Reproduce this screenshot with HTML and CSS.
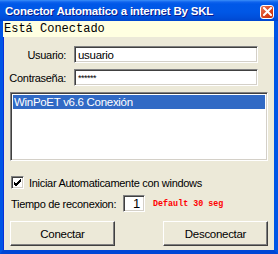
FILE: index.html
```html
<!DOCTYPE html>
<html>
<head>
<meta charset="utf-8">
<link rel="stylesheet" href="styles.css">
</head>
<body>
<div class="window">
  <div class="titlebar">
    <span class="title">Conector Automatico a internet By SKL</span>
    <span class="close"><svg width="9" height="9" viewBox="0 0 9 9"><path d="M1 1L8 8M8 1L1 8" stroke="#fff" stroke-width="2" stroke-linecap="square"/></svg></span>
  </div>
  <div class="status">Está Conectado</div>
  <div class="content">
    <div class="fields">
      <label class="lbl">Usuario:</label>
      <div class="input">usuario</div>
      <label class="lbl">Contraseña:</label>
      <div class="input pass">******</div>
    </div>
    <div class="listbox">
      <div class="item sel">WinPoET v6.6 Conexión</div>
    </div>
    <div class="check-row">
      <span class="checkbox"><svg width="9" height="9" viewBox="0 0 9 9"><path d="M1 4L3 6L8 1M1 5L3 7L8 2M1 6L3 8L8 3" stroke="#000" stroke-width="1" fill="none"/></svg></span>
      <span>Iniciar Automaticamente con windows</span>
    </div>
    <div class="time-row">
      <span class="tlabel">Tiempo de reconexion:</span>
      <div class="input num">1</div>
      <span class="hint">Default 30 seg</span>
    </div>
    <div class="buttons">
      <div class="btn">Conectar</div>
      <div class="btn">Desconectar</div>
    </div>
  </div>
</div>
</body>
</html>
```
FILE: styles.css
```css
html, body { margin: 0; padding: 0; }
body { width: 278px; height: 254px; overflow: hidden; background: #ece9d8; }
.window {
  width: 278px; height: 254px; box-sizing: border-box;
  display: flex; flex-direction: column;
  background: #ece9d8;
  border-left: 3px solid #0055e5;
  border-right: 4px solid #0055e5;
  border-bottom: 4px solid #0046d5;
  box-shadow: inset 1px 0 0 #0831d9;
  font-family: "Liberation Sans", Arial, sans-serif;
  font-size: 11px;
  letter-spacing: -0.3px;
  color: #000;
}
.titlebar {
  height: 21px; margin: 0 -4px 0 -3px;
  background: linear-gradient(#3b8ff8 0, #0f63ee 2px, #0058e8 4px, #0057e6 12px, #0050dc 17px, #0046cf 21px);
  display: flex; align-items: center; justify-content: space-between;
  padding: 0 4px 0 5px;
}
.title {
  color: #fff; font-weight: bold; font-size: 11.5px; letter-spacing: -0.2px;
  font-family: "Liberation Sans", Arial, sans-serif;
  text-shadow: 1px 1px 0 #0a1a8a;
}
.close {
  width: 14px; height: 14px; box-sizing: border-box;
  border: 1px solid #fff; border-radius: 3px;
  background: linear-gradient(135deg, #e8785a, #d8401a 60%, #c43010);
  display: flex; align-items: center; justify-content: center;
  margin-top: 2px;
}
.status {
  height: 16px; background: #ffffe1; letter-spacing: 0;
  font-family: "Liberation Mono", "Courier New", monospace; font-size: 12px;
  line-height: 16px; padding-left: 1px;
}
.content { display: flex; flex-direction: column; padding-top: 9px; }
.fields {
  display: grid; grid-template-columns: 63px 184px; column-gap: 8px; row-gap: 6px;
  align-items: center;
}
.lbl { text-align: right; white-space: nowrap; }
.input {
  height: 17px; box-sizing: border-box; background: #fff;
  border-top: 1px solid #808080; border-left: 1px solid #808080;
  border-right: 1px solid #ffffff; border-bottom: 1px solid #ffffff;
  box-shadow: inset 1px 1px 0 #404040, inset -1px -1px 0 #d4d0c8;
  padding: 1px 3px 0; line-height: 14px; font-size: 11.5px;
}
.pass { font-size: 9px; letter-spacing: -0.5px; }
.listbox {
  margin: 6px 6px 0 7px; height: 69px; box-sizing: border-box; background: #fff;
  border-top: 1px solid #808080; border-left: 1px solid #808080;
  border-right: 1px solid #ffffff; border-bottom: 1px solid #ffffff;
  box-shadow: inset 1px 1px 0 #404040, inset -1px -1px 0 #d4d0c8;
  padding: 2px;
}
.item { height: 14px; line-height: 14px; padding-left: 1px; font-size: 11.5px; }
.sel { background: #316ac5; color: #fff; }
.check-row {
  display: flex; align-items: center; gap: 5px;
  margin: 15px 0 0 8px; height: 13px;
}
.checkbox {
  width: 13px; height: 13px; box-sizing: border-box; background: #fff;
  border-top: 1px solid #808080; border-left: 1px solid #808080;
  border-right: 1px solid #fff; border-bottom: 1px solid #fff;
  box-shadow: inset 1px 1px 0 #404040, inset -1px -1px 0 #d4d0c8;
  display: flex; align-items: center; justify-content: center;
}
.time-row {
  display: flex; align-items: center; margin: 6px 0 0 8px; height: 17px;
}
.tlabel { width: 112px; white-space: nowrap; }
.num { width: 22px; text-align: right; padding-right: 4px; font-size: 13px; }
.hint {
  margin-left: 8px; color: #ff0000; letter-spacing: 0;
  font-family: "Liberation Mono", "Courier New", monospace; font-size: 8.4px; font-weight: bold;
}
.buttons { display: flex; justify-content: space-between; margin: 9px 6px 0 7px; }
.btn {
  width: 105px; height: 25px; box-sizing: border-box;
  border-top: 1px solid #fff; border-left: 1px solid #fff;
  border-right: 1px solid #404040; border-bottom: 1px solid #404040;
  box-shadow: inset -1px -1px 0 #808080;
  display: flex; align-items: center; justify-content: center;
  font-size: 11.5px;
}
```
